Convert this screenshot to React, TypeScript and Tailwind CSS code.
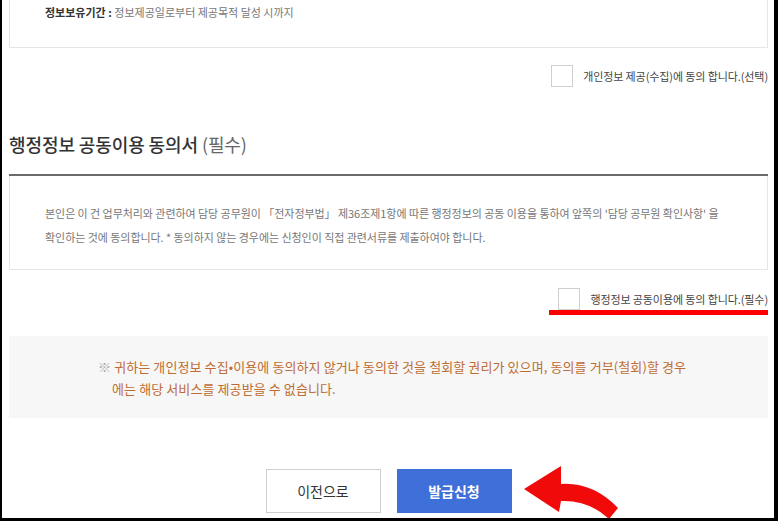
import React from "react";

const Checkbox = () => (
  <span className="inline-block w-[22px] h-[22px] border border-[#cfcfcf] bg-white shrink-0"></span>
);

const RedArrow = () => (
  <svg width="100" height="58" viewBox="0 0 100 58" className="absolute left-full ml-[9px] -top-[4px]">
    <path d="M3 24 L40 1 L40 19 Q72 17 97 43 L88 54 Q68 35 40 36 L38 47 Z" fill="#f00a0a" />
  </svg>
);

export default function App() {
  return (
    <div className="w-[778px] h-[521px] overflow-hidden bg-white border-l-2 border-r-4 border-b-[3px] border-black font-['Noto_Sans_CJK_KR',sans-serif]">
      <div className="pl-[7px] pr-[6px]">
        {/* 정보 제공 박스 (위쪽 잘림) */}
        <div className="border-x border-b border-[#e6e6e6] pt-[2px] pb-[25px] pl-[35px] text-[11px] leading-[20px] text-[#777]">
          <span className="font-bold text-[#333]">정보보유기간 : </span>
          정보제공일로부터 제공목적 달성 시까지
        </div>

        <div className="mt-[17px] flex items-center justify-end gap-[10px] h-[22px]">
          <Checkbox />
          <span className="text-[11px] text-[#444] tracking-[-0.1px]">개인정보 제공(수집)에 동의 합니다.(선택)</span>
        </div>

        {/* 행정정보 공동이용 동의서 */}
        <h2 className="mt-[45px] text-[18px] leading-[24px] font-medium text-[#333] tracking-[-0.1px]">
          행정정보 공동이용 동의서 <span className="text-[#666] font-normal">(필수)</span>
        </h2>
        <div className="mt-[18px] h-[2px] bg-[#6b6b6b]"></div>
        <div className="border-x border-b border-[#e6e6e6] pt-[25px] pb-[20px] pl-[35px] text-[11px] leading-[24px] text-[#777] tracking-[-0.05px]">
          <p>본인은 이 건 업무처리와 관련하여 담당 공무원이 「전자정부법」 제36조제1항에 따른 행정정보의 공동 이용을 통하여 앞쪽의 '담당 공무원 확인사항' 을</p>
          <p>확인하는 것에 동의합니다. * 동의하지 않는 경우에는 신청인이 직접 관련서류를 제출하여야 합니다.</p>
        </div>

        <div className="mt-[18px] flex items-center justify-end gap-[10px] h-[22px]">
          <Checkbox />
          <span className="text-[11px] text-[#444] tracking-[-0.1px]">행정정보 공동이용에 동의 합니다.(필수)</span>
        </div>
        <div className="ml-auto w-[219px] h-[5px] bg-[#ff0000]"></div>

        {/* 안내 문구 */}
        <div className="mt-[21px] bg-[#f7f7f7] pt-[20px] pb-[18px] pl-[89px] text-[13px] leading-[22px] tracking-[0.1px] text-[#bd6c34]">
          <p className="pl-[14px] -indent-[14px]">
            <span className="text-[#aaa]">※ </span>귀하는 개인정보 수집•이용에 동의하지 않거나 동의한 것을 철회할 권리가 있으며, 동의를 거부(철회)할 경우
            <br />
            에는 해당 서비스를 제공받을 수 없습니다.
          </p>
        </div>

        {/* 버튼 */}
        <div className="mt-[51px] flex justify-center">
          <div className="relative flex gap-[16px]">
            <button className="w-[115px] h-[44px] border border-[#cfcfcf] bg-white text-[14px] text-[#333]">이전으로</button>
            <button className="w-[115px] h-[44px] bg-[#3f6fd8] text-[14px] font-bold text-white">발급신청</button>
            <RedArrow />
          </div>
        </div>
      </div>
    </div>
  );
}
